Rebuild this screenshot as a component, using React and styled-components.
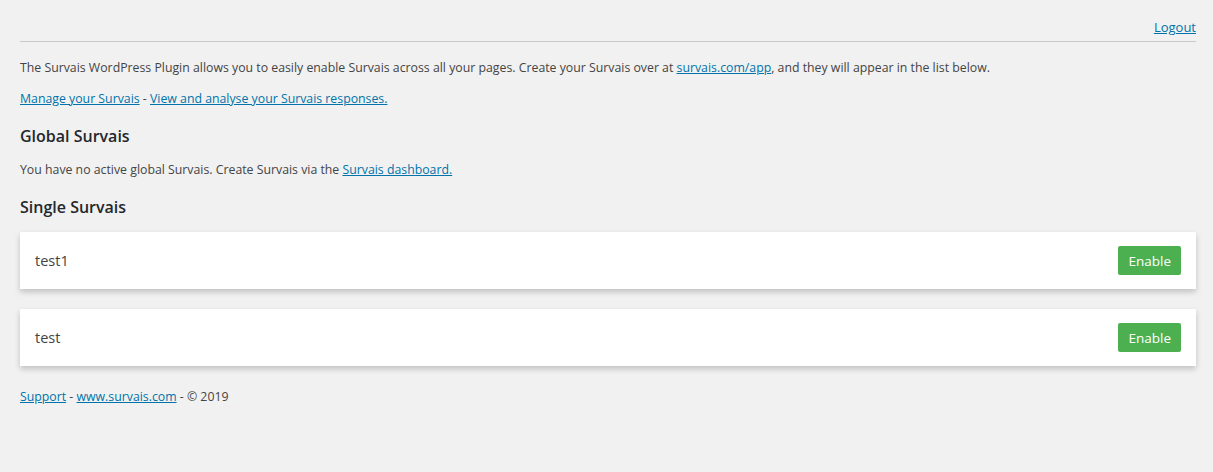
import React from "react";
import styled, { createGlobalStyle } from "styled-components";

const GlobalStyle = createGlobalStyle`
	body {
		margin: 0;
		background: #f1f1f1;
		color: #444;
		font-family: "Open Sans", "Noto Sans", sans-serif;
		font-size: 12.3px;
	}
`;

const surveys = [
	{ id: 1, name: "test1" },
	{ id: 2, name: "test" },
];

const App = () => {
	return (
		<>
			<GlobalStyle />
			<Page>
				<TopBar>
					<Link href="#">Logout</Link>
				</TopBar>
				<Text>
					The Survais WordPress Plugin allows you to easily enable Survais across
					all your pages. Create your Survais over at{" "}
					<Link href="#">survais.com/app</Link>, and they will appear in the list
					below.
				</Text>
				<Text>
					<Link href="#">Manage your Survais</Link> -{" "}
					<Link href="#">View and analyse your Survais responses.</Link>
				</Text>
				<Heading>Global Survais</Heading>
				<Text>
					You have no active global Survais. Create Survais via the{" "}
					<Link href="#">Survais dashboard.</Link>
				</Text>
				<Heading>Single Survais</Heading>
				<SurveyList>
					{surveys.map((s) => (
						<SurveyCard key={s.id}>
							<SurveyName>{s.name}</SurveyName>
							<EnableButton>Enable</EnableButton>
						</SurveyCard>
					))}
				</SurveyList>
				<Footer>
					<Link href="#">Support</Link> - <Link href="#">www.survais.com</Link> -
					© 2019
				</Footer>
			</Page>
		</>
	);
};

export default App;

const Page = styled.div`
	padding: 18px 17px 40px 20px;
`;

const TopBar = styled.div`
	display: flex;
	justify-content: flex-end;
	border-bottom: 1px solid #c8c8c8;
	padding-bottom: 5px;
	margin-bottom: 17px;
	font-size: 13px;
	line-height: 18px;
`;

const Link = styled.a`
	color: #0073aa;
	text-decoration: underline;
`;

const Text = styled.p`
	margin: 0 0 13px;
	line-height: 18px;
`;

const Heading = styled.h2`
	margin: 17px 0 14px;
	font-size: 16px;
	font-weight: 600;
	line-height: 22px;
	color: #23282d;
`;

const SurveyList = styled.div`
	display: flex;
	flex-direction: column;
	gap: 20px;
	margin-bottom: 22px;
`;

const SurveyCard = styled.div`
	display: flex;
	align-items: center;
	justify-content: space-between;
	height: 57px;
	padding: 0 15px;
	background: #fff;
	box-shadow: 0 3px 6px rgba(0, 0, 0, 0.2);
`;

const SurveyName = styled.span`
	font-size: 14.5px;
	color: #444;
`;

const EnableButton = styled.button`
	height: 29px;
	padding: 0 10px;
	border: none;
	border-radius: 2px;
	background: #4caf50;
	color: #fff;
	font-family: inherit;
	font-size: 13.5px;
	font-weight: 500;
	cursor: pointer;
`;

const Footer = styled.div`
	line-height: 18px;
`;
